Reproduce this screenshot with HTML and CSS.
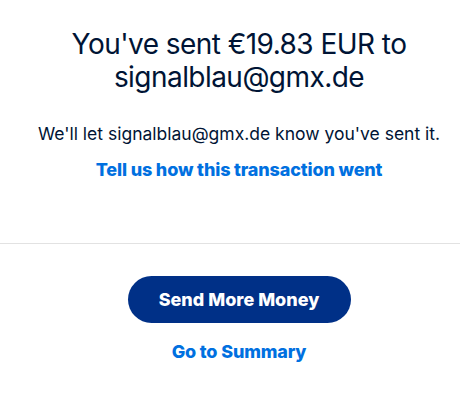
FILE: index.html
```html
<!DOCTYPE html>
<html>
<head>
<meta charset="utf-8">
<link rel="stylesheet" href="styles.css">
</head>
<body>
<div class="page">
  <section class="top">
    <h1 class="title">You've sent €19.83 EUR to signalblau@gmx.de</h1>
    <p class="note">We'll let signalblau@gmx.de know you've sent it.</p>
    <a class="link" href="#">Tell us how this transaction went</a>
  </section>
  <hr class="divider">
  <section class="actions">
    <button class="primary">Send More Money</button>
    <a class="link" href="#">Go to Summary</a>
  </section>
</div>
</body>
</html>
```
FILE: styles.css
```css
html, body { margin: 0; padding: 0; background: #fff; }
body { font-family: Inter, "Noto Sans", sans-serif; color: #001435; }
.page { width: 460px; }
.top { display: flex; flex-direction: column; align-items: center; text-align: center; padding: 28px 0 0 18px; }
.title { margin: 0; font-size: 28px; font-weight: 400; line-height: 33px; letter-spacing: -0.55px; max-width: 380px; }
.note { margin: 29px 0 0; font-size: 17.5px; line-height: 22px; white-space: nowrap; }
.link { color: #0070e0; font-weight: 800; font-size: 18px; text-decoration: none; line-height: 22px; letter-spacing: -0.15px; }
.top .link { margin-top: 14px; }
.divider { border: 0; border-top: 1px solid #e2e2e2; margin: 62px 0 0; }
.actions { display: flex; flex-direction: column; align-items: center; padding: 32px 0 0 18px; }
.primary { width: 223px; height: 47px; border: 0; border-radius: 24px; background: #003087; color: #fff; font-family: inherit; font-size: 18px; font-weight: 800; padding: 0; }
.actions .link { margin-top: 18px; }
```
